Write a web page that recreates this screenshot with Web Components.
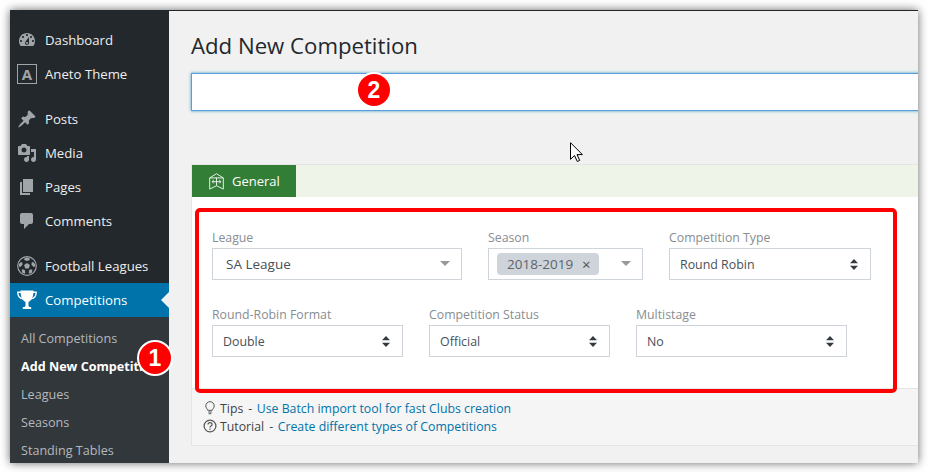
<!DOCTYPE html>
<html>
<head>
<meta charset="utf-8">
<title>Add New Competition</title>
<style>
  html, body { margin: 0; background: #fff; }
  body { padding: 10px; font-family: "Open Sans", sans-serif; font-size: 13px; overflow: hidden; }
</style>
</head>
<body>
<admin-window>
  <admin-menu slot="menu">
    <menu-item label="Dashboard"><svg viewBox="0 0 20 20"><path fill-rule="evenodd" d="M3.76 16h12.48c1.1-1.37 1.76-3.11 1.76-5 0-4.42-3.58-8-8-8s-8 3.58-8 8c0 1.89.66 3.63 1.76 5zM10 4c.55 0 1 .45 1 1s-.45 1-1 1-1-.45-1-1 .45-1 1-1zM6 6c.55 0 1 .45 1 1s-.45 1-1 1-1-.45-1-1 .45-1 1-1zm8 0c.55 0 1 .45 1 1s-.45 1-1 1-1-.45-1-1 .45-1 1-1zm-5.37 5.55L12 7v6c0 1.1-.9 2-2 2s-2-.9-2-2c0-.57.24-1.08.63-1.45zM4 10c.55 0 1 .45 1 1s-.45 1-1 1-1-.45-1-1 .45-1 1-1zm12 0c.55 0 1 .45 1 1s-.45 1-1 1-1-.45-1-1 .45-1 1-1zm-5 3c0-.55-.45-1-1-1s-1 .45-1 1 .45 1 1 1 1-.45 1-1z"/></svg></menu-item>
    <menu-item label="Aneto Theme" boxed>A</menu-item>
    <menu-item label="Posts" class="sep"><svg viewBox="0 0 20 20"><path d="M10.44 3.02l1.82-1.82 6.36 6.35-1.83 1.82c-1.05-.68-2.48-.57-3.41.36l-.75.75c-.92.93-1.04 2.35-.35 3.41l-1.83 1.82-2.41-2.41-2.8 2.79c-.42.42-3.38 2.71-3.8 2.29s1.86-3.39 2.28-3.81l2.79-2.79L4.1 9.36l1.83-1.82c1.05.69 2.48.57 3.4-.36l.75-.75c.93-.92 1.05-2.35.36-3.41z"/></svg></menu-item>
    <menu-item label="Media"><svg viewBox="0 0 20 20"><path fill-rule="evenodd" d="M13 11V4c0-.55-.45-1-1-1h-1.67L9 1H5L3.67 3H2c-.55 0-1 .45-1 1v7c0 .55.45 1 1 1h10c.55 0 1-.45 1-1zM7 4.5c1.38 0 2.5 1.12 2.5 2.5S8.38 9.5 7 9.5 4.5 8.38 4.5 7 5.62 4.5 7 4.5zM14 6h5v10.5c0 1.38-1.12 2.5-2.5 2.5S14 17.88 14 16.5s1.12-2.5 2.5-2.5c.17 0 .34.02.5.05V9h-3V6zm-4 8.05V13h2v3.5c0 1.38-1.12 2.5-2.5 2.5S7 17.88 7 16.5 8.12 14 9.5 14c.17 0 .34.02.5.05z"/></svg></menu-item>
    <menu-item label="Pages"><svg viewBox="0 0 20 20"><path d="M6 15V2h10v13H6zm-1 1h8v2H3V5h2v11z"/></svg></menu-item>
    <menu-item label="Comments"><svg viewBox="0 0 20 20"><path d="M5 2h9c1.1 0 2 .9 2 2v7c0 1.1-.9 2-2 2h-2l-5 5v-5H5c-1.1 0-2-.9-2-2V4c0-1.1.9-2 2-2z"/></svg></menu-item>
    <menu-item label="Football Leagues" class="sep"><svg viewBox="0 0 20 20"><circle cx="10" cy="10" r="9.3" fill="none" stroke="currentColor" stroke-width="1.2"/><path d="M10 7l2.900 2.100-1.100 3.400H8.200L7.100 9.100zM10 1.500l2.800 1-.1 1.400L10 4.900 7.300 3.900l-.1-1.400zM1.800 8.200l2-2.300 1.500.6.200 2.300-2.100 2.100-1.600-.7zM18.200 8.200l-2-2.300-1.500.6-.2 2.300 2.100 2.100 1.600-.7zM5.200 16.800l-.6-2.700 1.300-.9 1.900.9.500 2.700-.9 1z M14.800 16.800l.6-2.700-1.300-.9-1.900.9-.5 2.700.9 1z"/></svg></menu-item>
    <menu-item label="Competitions" active><svg viewBox="0 0 20 20"><path d="M3.500.5h13c0 5.500-1.500 10-5 11.500v3.500c0 1 1 1.500 2.700 1.800v1.700H5.800v-1.700c1.700-.3 2.700-.8 2.700-1.800V12C5 10.500 3.500 6 3.500.5z"/><path fill="none" stroke="currentColor" stroke-width="1.400" d="M4 2.200H.8c0 3.600 2 6 5 6.600M16 2.200h3.200c0 3.600-2 6-5 6.600"/></svg></menu-item>
    <sub-menu>
      <sub-item>All Competitions</sub-item>
      <sub-item current>Add New Competition</sub-item>
      <sub-item>Leagues</sub-item>
      <sub-item>Seasons</sub-item>
      <sub-item>Standing Tables</sub-item>
    </sub-menu>
  </admin-menu>

  <h1 slot="title">Add New Competition</h1>
  <title-input slot="input"></title-input>

  <meta-box slot="box" tab="General">
    <svg slot="tab-icon" viewBox="0 0 15 17" fill="none" stroke="currentColor" stroke-width="1"><path d="M7.500.7l6.800 4.200v11.200l-6.800-3.400-6.800 3.400V4.900z"/><path d="M.7 4.900h13.600M3.200 8.700h8.600M4.800 7L3.100 8.700l1.700 1.700M10.200 7l1.700 1.700-1.700 1.700M7.500 4.900v7.800"/></svg>
    <field-row>
      <form-field label="League" width="250"><choice-select value="SA League"></choice-select></form-field>
      <form-field label="Season" width="155"><choice-select chip="2018-2019"></choice-select></form-field>
      <form-field label="Competition Type" width="202"><plain-select value="Round Robin"></plain-select></form-field>
    </field-row>
    <field-row>
      <form-field label="Round-Robin Format" width="191"><plain-select value="Double"></plain-select></form-field>
      <form-field label="Competition Status" width="181"><plain-select value="Official"></plain-select></form-field>
      <form-field label="Multistage" width="211"><plain-select value="No"></plain-select></form-field>
    </field-row>
    <help-line slot="footer" name="Tips" link="Use Batch import tool for fast Clubs creation"><svg viewBox="0 0 14 14" fill="none" stroke="currentColor" stroke-width="1"><path d="M4.700 9.300C4.400 7.800 2.800 7 2.800 4.900a4.200 4.200 0 0 1 8.400 0c0 2.100-1.600 2.900-1.900 4.400z"/><path d="M5.200 11h3.600M5.600 12.700h2.800"/></svg></help-line>
    <help-line slot="footer" name="Tutorial" link="Create different types of Competitions"><svg viewBox="0 0 14 14" fill="none" stroke="currentColor" stroke-width="1.200"><circle cx="7" cy="7" r="5.900"/><path d="M5 5.500c0-2.500 4.100-2.500 4.100-.1C9.100 7 7 6.800 7 8.500M7 9.500v1.300"/></svg></help-line>
  </meta-box>

  <mark-frame slot="overlay"></mark-frame>
  <step-badge slot="overlay" n="1" style="left:127px;top:330px"></step-badge>
  <step-badge slot="overlay" n="2" style="left:346px;top:62px"></step-badge>
  <svg slot="overlay" style="position:absolute;left:560px;top:132px" width="14" height="20" viewBox="0 0 14 20"><path d="M.5.700v16.600l4-3.800 2.800 6 2.400-1.100-2.700-5.800h5.400z" fill="#fff" stroke="#000" stroke-width="1"/></svg>
</admin-window>

<template id="admin-window-tpl">
  <style>
    :host { display: flex; position: relative; width: 908px; height: 453px; overflow: visible; box-shadow: 0 0 9px rgba(0,0,0,.6); background: #f1f1f1; }
    .clip { display: flex; width: 100%; height: 100%; overflow: hidden; position: relative; }
    main { flex: 1; min-width: 0; border-top: 1px solid #23282d; padding: 19px 0 0 22px; }
    .over { position: absolute; inset: 0; pointer-events: none; }
    ::slotted(h1) { margin: 0; font: 400 22.2px/31px "Open Sans", sans-serif; color: #23282d; }
  </style>
  <div class="clip">
    <slot name="menu"></slot>
    <main>
      <slot name="title"></slot>
      <slot name="input"></slot>
      <slot name="box"></slot>
    </main>
    <div class="over"><slot name="overlay"></slot></div>
  </div>
</template>

<script>
  function tpl(id) {
    return document.getElementById(id).content.cloneNode(true);
  }

  class AdminWindow extends HTMLElement {
    constructor() {
      super();
      this.attachShadow({ mode: "open" }).appendChild(tpl("admin-window-tpl"));
    }
  }

  class AdminMenu extends HTMLElement {
    constructor() {
      super();
      this.attachShadow({ mode: "open" }).innerHTML = `
        <style>
          :host { display: block; flex: none; width: 159px; height: 100%; padding-top: 13px; box-sizing: border-box; background: #23282d; overflow: hidden; }
        </style>
        <slot></slot>`;
    }
  }

  class MenuItem extends HTMLElement {
    constructor() {
      super();
      this.attachShadow({ mode: "open" });
    }
    connectedCallback() {
      const label = this.getAttribute("label");
      this.shadowRoot.innerHTML = `
        <style>
          :host { display: flex; align-items: center; height: 34px; padding-left: 7px; color: #eee; font-size: 13.2px; position: relative; }
          :host(.sep) { margin-top: 11px; }
          :host([active]) { background: #0073aa; color: #fff; }
          :host([active])::after { content: ""; position: absolute; right: 0; top: 50%; margin-top: -8px; border: 8px solid transparent; border-right-color: #f1f1f1; border-left-width: 0; }
          .icon { width: 20px; height: 20px; margin-right: 8px; color: #a0a5aa; display: flex; align-items: center; justify-content: center; box-sizing: border-box; }
          :host([active]) .icon { color: #fff; }
          :host([boxed]) .icon { border: 1px solid #a0a5aa; font: 700 15px "Open Sans", sans-serif; }
          ::slotted(svg) { width: 20px; height: 20px; fill: currentColor; display: block; }
        </style>
        <span class="icon"><slot></slot></span><span>${label}</span>`;
    }
  }

  class SubMenu extends HTMLElement {
    constructor() {
      super();
      this.attachShadow({ mode: "open" }).innerHTML = `
        <style>
          :host { display: block; background: #32373c; padding-top: 8px; height: 160px; }
        </style>
        <slot></slot>`;
    }
  }

  class SubItem extends HTMLElement {
    constructor() {
      super();
      this.attachShadow({ mode: "open" }).innerHTML = `
        <style>
          :host { display: block; height: 28px; line-height: 28px; padding-left: 11px; font-size: 12.6px; color: #b4b9be; white-space: nowrap; overflow: hidden; }
          :host([current]) { color: #fff; font-weight: 700; }
        </style>
        <slot></slot>`;
    }
  }

  class TitleInput extends HTMLElement {
    constructor() {
      super();
      this.attachShadow({ mode: "open" }).innerHTML = `
        <style>
          :host { display: block; margin: 12px -20px 0 0; }
          input { display: block; width: 100%; height: 38px; box-sizing: border-box; border: 1px solid #5b9dd9; box-shadow: 0 0 3px rgba(30,140,190,.8); background: #fff; outline: 0; padding: 0 8px; }
        </style>
        <input type="text">`;
    }
  }

  class MetaBox extends HTMLElement {
    constructor() {
      super();
      this.attachShadow({ mode: "open" });
    }
    connectedCallback() {
      const tab = this.getAttribute("tab");
      this.shadowRoot.innerHTML = `
        <style>
          :host { display: block; margin: 53px -20px 0 0; border: 1px solid #e5e5e5; background: #fff; }
          .tabs { display: flex; background: #eff4e8; height: 32px; }
          .tab { display: flex; align-items: center; gap: 8px; width: 104px; box-sizing: border-box; padding-left: 17px; background: #327e36; color: #fff; font-size: 13px; }
          ::slotted(svg[slot="tab-icon"]) { width: 15px; height: 17px; color: #e6f1e6; }
          .body { padding: 33px 0 31px 20px; }
          .foot { height: 57px; box-sizing: border-box; padding: 10px 0 0 11px; background: #f5f5f5; border-top: 1px solid #e5e5e5; }
        </style>
        <div class="tabs"><div class="tab"><slot name="tab-icon"></slot>${tab}</div></div>
        <div class="body"><slot></slot></div>
        <div class="foot"><slot name="footer"></slot></div>`;
    }
  }

  class FieldRow extends HTMLElement {
    constructor() {
      super();
      this.attachShadow({ mode: "open" }).innerHTML = `
        <style>
          :host { display: flex; gap: 26px; }
          :host(:not(:first-of-type)) { margin-top: 27px; }
        </style>
        <slot></slot>`;
    }
  }

  class FormField extends HTMLElement {
    constructor() {
      super();
      this.attachShadow({ mode: "open" });
    }
    connectedCallback() {
      this.shadowRoot.innerHTML = `
        <style>
          :host { display: block; width: ${this.getAttribute("width")}px; }
          label { display: block; height: 18px; line-height: 16px; font-size: 12.3px; color: #888d92; white-space: nowrap; }
        </style>
        <label>${this.getAttribute("label")}</label><slot></slot>`;
    }
  }

  class ChoiceSelect extends HTMLElement {
    constructor() {
      super();
      this.attachShadow({ mode: "open" });
    }
    connectedCallback() {
      const chip = this.getAttribute("chip");
      const inner = chip
        ? `<span class="chip">${chip}<i>×</i></span>`
        : `<span class="val">${this.getAttribute("value")}</span>`;
      this.shadowRoot.innerHTML = `
        <style>
          :host { display: flex; align-items: center; height: 32px; box-sizing: border-box; border: 1px solid #ced4da; background: #fff; font-size: 13.5px; color: #495057; position: relative; }
          .val { padding-left: 13px; }
          .chip { display: flex; align-items: center; margin-left: 8px; height: 22px; width: 102px; box-sizing: border-box; padding-left: 10px; border-radius: 4px; background: #ced4da; color: #5c646c; }
          i { font-style: normal; margin-left: 9px; color: #495057; font-size: 15px; }
          .arrow { position: absolute; right: 11px; top: 12px; border: 5px solid transparent; border-top: 5px solid #999; border-bottom: 0; }
        </style>
        ${inner}<span class="arrow"></span>`;
    }
  }

  class PlainSelect extends HTMLElement {
    constructor() {
      super();
      this.attachShadow({ mode: "open" });
    }
    connectedCallback() {
      this.shadowRoot.innerHTML = `
        <style>
          :host { display: flex; align-items: center; justify-content: space-between; height: 32px; box-sizing: border-box; padding: 0 12px 0 10px; border: 1px solid #ced4da; background: #fff; font-size: 12.4px; color: #495057; }
          svg { width: 8px; height: 11px; display: block; }
        </style>
        <span>${this.getAttribute("value")}</span>
        <svg viewBox="0 0 8 11"><path fill="#343a40" d="M4 0l4 4.300H0zM4 11L0 6.700h8z"/></svg>`;
    }
  }

  class HelpLine extends HTMLElement {
    constructor() {
      super();
      this.attachShadow({ mode: "open" });
    }
    connectedCallback() {
      this.shadowRoot.innerHTML = `
        <style>
          :host { display: flex; align-items: center; height: 18px; font-size: 12.3px; color: #444; white-space: nowrap; }
          ::slotted(svg) { width: 14px; height: 14px; margin-right: 3px; flex: none; color: #555; }
          .dash { margin: 0 4.500px 0 5px; }
          a { color: #0073aa; text-decoration: none; }
        </style>
        <slot></slot><span>${this.getAttribute("name")}</span><span class="dash">-</span><a href="#">${this.getAttribute("link")}</a>`;
    }
  }

  class MarkFrame extends HTMLElement {
    constructor() {
      super();
      this.attachShadow({ mode: "open" }).innerHTML = `
        <style>
          :host { position: absolute; left: 185px; top: 198px; width: 702px; height: 185px; box-sizing: border-box; border: 4px solid #f00; border-radius: 5px; }
        </style>`;
    }
  }

  class StepBadge extends HTMLElement {
    constructor() {
      super();
      this.attachShadow({ mode: "open" });
    }
    connectedCallback() {
      this.shadowRoot.innerHTML = `
        <style>
          :host { position: absolute; display: flex; align-items: center; justify-content: center; width: 36px; height: 36px; box-sizing: border-box; border: 2px solid #fff; border-radius: 50%; background: #f00; color: #fff; font: 700 23px "Liberation Sans", sans-serif; }
        </style>
        ${this.getAttribute("n")}`;
    }
  }

  customElements.define("admin-window", AdminWindow);
  customElements.define("admin-menu", AdminMenu);
  customElements.define("menu-item", MenuItem);
  customElements.define("sub-menu", SubMenu);
  customElements.define("sub-item", SubItem);
  customElements.define("title-input", TitleInput);
  customElements.define("meta-box", MetaBox);
  customElements.define("field-row", FieldRow);
  customElements.define("form-field", FormField);
  customElements.define("choice-select", ChoiceSelect);
  customElements.define("plain-select", PlainSelect);
  customElements.define("help-line", HelpLine);
  customElements.define("mark-frame", MarkFrame);
  customElements.define("step-badge", StepBadge);
</script>
</body>
</html>
